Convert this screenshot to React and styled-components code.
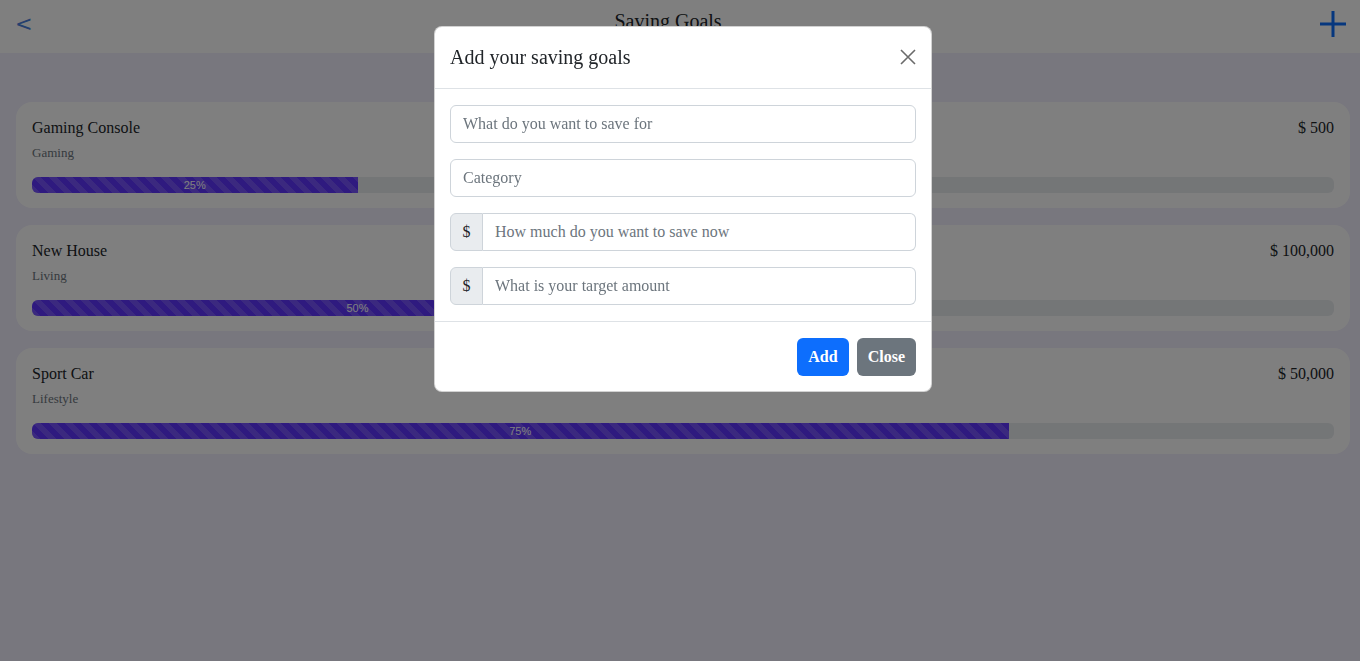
import React from 'react'
import styled, { createGlobalStyle } from 'styled-components'

const goals = [
  { title: 'Gaming Console', category: 'Gaming', amount: '$ 500', percent: 25 },
  { title: 'New House', category: 'Living', amount: '$ 100,000', percent: 50 },
  { title: 'Sport Car', category: 'Lifestyle', amount: '$ 50,000', percent: 75 }
]

const GlobalStyle = createGlobalStyle`
  html, body {
    margin: 0;
    padding: 0;
  }
  body {
    font-family: "Liberation Serif", "Times New Roman", serif;
    font-size: 16px;
    color: #212529;
    background: #f0eefc;
  }
  * { box-sizing: border-box; }
`

export default function App () {
  return (
    <>
      <GlobalStyle />
      <Page>
        <Header>
          <BackButton>&lt;</BackButton>
          <HeaderTitle>Saving Goals</HeaderTitle>
          <AddIcon>
            <svg width='26' height='26' viewBox='0 0 26 26'>
              <path d='M13 0v26M0 13h26' stroke='#0d6efd' strokeWidth='3' fill='none' />
            </svg>
          </AddIcon>
        </Header>
        <Content>
          {goals.map((goal, i) => (
            <Card key={i}>
              <CardRow>
                <GoalTitle>{goal.title}</GoalTitle>
                <Amount>{goal.amount}</Amount>
              </CardRow>
              <Category>{goal.category}</Category>
              <Track>
                <Fill style={{ width: `${goal.percent}%` }}>{goal.percent}%</Fill>
              </Track>
            </Card>
          ))}
        </Content>
      </Page>

      <Backdrop>
        <Dialog>
          <ModalHeader>
            <ModalTitle>Add your saving goals</ModalTitle>
            <CloseX>
              <svg width='16' height='16' viewBox='0 0 16 16'>
                <path d='M1 1l14 14M15 1L1 15' stroke='#6b6b6b' strokeWidth='1.6' fill='none' />
              </svg>
            </CloseX>
          </ModalHeader>
          <ModalBody>
            <Input placeholder='What do you want to save for' />
            <Input placeholder='Category' />
            <InputGroup>
              <Addon>$</Addon>
              <GroupInput placeholder='How much do you want to save now' />
            </InputGroup>
            <InputGroup>
              <Addon>$</Addon>
              <GroupInput placeholder='What is your target amount' />
            </InputGroup>
          </ModalBody>
          <ModalFooter>
            <Button $variant='primary'>Add</Button>
            <Button $variant='secondary'>Close</Button>
          </ModalFooter>
        </Dialog>
      </Backdrop>
    </>
  )
}

const Page = styled.div`
  min-height: 100vh;
  background: #f0eefc;
`

const Header = styled.header`
  height: 53px;
  background: #fff;
  display: flex;
  align-items: center;
  padding: 0 14px 0 14px;
`

const BackButton = styled.span`
  width: 40px;
  font-family: "DejaVu Sans", sans-serif;
  font-size: 21px;
  color: #4a80dc;
  padding-left: 1px;
  margin-top: -6px;
`

const HeaderTitle = styled.h1`
  flex: 1;
  margin: 0;
  text-align: center;
  font-size: 20px;
  font-weight: normal;
  margin-top: -10px;
  padding-right: 38px;
`

const AddIcon = styled.span`
  width: 26px;
  height: 26px;
  display: flex;
  margin-top: -5px;
`

const Content = styled.main`
  padding: 49px 10px 0 16px;
  display: flex;
  flex-direction: column;
  gap: 17px;
`

const Card = styled.section`
  background: #fff;
  border-radius: 16px;
  padding: 16px 16px 15px;
`

const CardRow = styled.div`
  display: flex;
  justify-content: space-between;
  line-height: 20px;
`

const GoalTitle = styled.span`
  font-size: 16px;
`

const Amount = styled.span`
  font-size: 16px;
`

const Category = styled.div`
  margin-top: 6px;
  font-size: 13px;
  line-height: 18px;
  color: #6c757d;
`

const Track = styled.div`
  margin-top: 15px;
  height: 16px;
  border-radius: 6px;
  background: #e9ecef;
  overflow: hidden;
  display: flex;
`

const Fill = styled.div`
  height: 100%;
  background-color: #5e34ff;
  background-image: linear-gradient(45deg, rgba(255,255,255,.15) 25%, transparent 25%, transparent 50%, rgba(255,255,255,.15) 50%, rgba(255,255,255,.15) 75%, transparent 75%, transparent);
  background-size: 16px 16px;
  color: #fff;
  font-family: "Liberation Sans", Arial, sans-serif;
  font-size: 11px;
  line-height: 16px;
  text-align: center;
`

const Backdrop = styled.div`
  position: fixed;
  inset: 0;
  background: rgba(0, 0, 0, 0.5);
  display: flex;
  justify-content: center;
  align-items: flex-start;
  padding: 26px 0 0 6px;
`

const Dialog = styled.div`
  width: 498px;
  background: #fff;
  border-radius: 8px;
  border: 1px solid rgba(0, 0, 0, 0.175);
  display: flex;
  flex-direction: column;
`

const ModalHeader = styled.div`
  display: flex;
  align-items: center;
  justify-content: space-between;
  padding: 15px 15px 16px 15px;
  border-bottom: 1px solid #dee2e6;
`

const ModalTitle = styled.h5`
  margin: 0;
  font-size: 20px;
  font-weight: normal;
  line-height: 30px;
`

const CloseX = styled.span`
  display: flex;
  width: 16px;
  height: 16px;
`

const ModalBody = styled.div`
  padding: 16px 15px;
  display: flex;
  flex-direction: column;
  gap: 16px;
`

const Input = styled.input`
  height: 38px;
  width: 100%;
  border: 1px solid #ced4da;
  border-radius: 6px;
  padding: 6px 12px;
  font-family: inherit;
  font-size: 16px;
  color: #212529;
  &::placeholder { color: #6c757d; }
`

const InputGroup = styled.div`
  display: flex;
  height: 38px;
`

const Addon = styled.span`
  width: 33px;
  display: flex;
  align-items: center;
  justify-content: center;
  background: #e9ecef;
  border: 1px solid #ced4da;
  border-radius: 6px 0 0 6px;
  font-size: 16px;
`

const GroupInput = styled(Input)`
  flex: 1;
  height: 38px;
  border-left: none;
  border-radius: 0 6px 6px 0;
`

const ModalFooter = styled.div`
  display: flex;
  justify-content: flex-end;
  gap: 8px;
  padding: 16px 15px 15px;
  border-top: 1px solid #dee2e6;
`

const Button = styled.button`
  height: 38px;
  padding: 0 11px;
  border: none;
  border-radius: 6px;
  font-family: inherit;
  font-size: 16px;
  font-weight: bold;
  color: #fff;
  background: ${p => (p.$variant === 'primary' ? '#0d6efd' : '#6c757d')};
`
